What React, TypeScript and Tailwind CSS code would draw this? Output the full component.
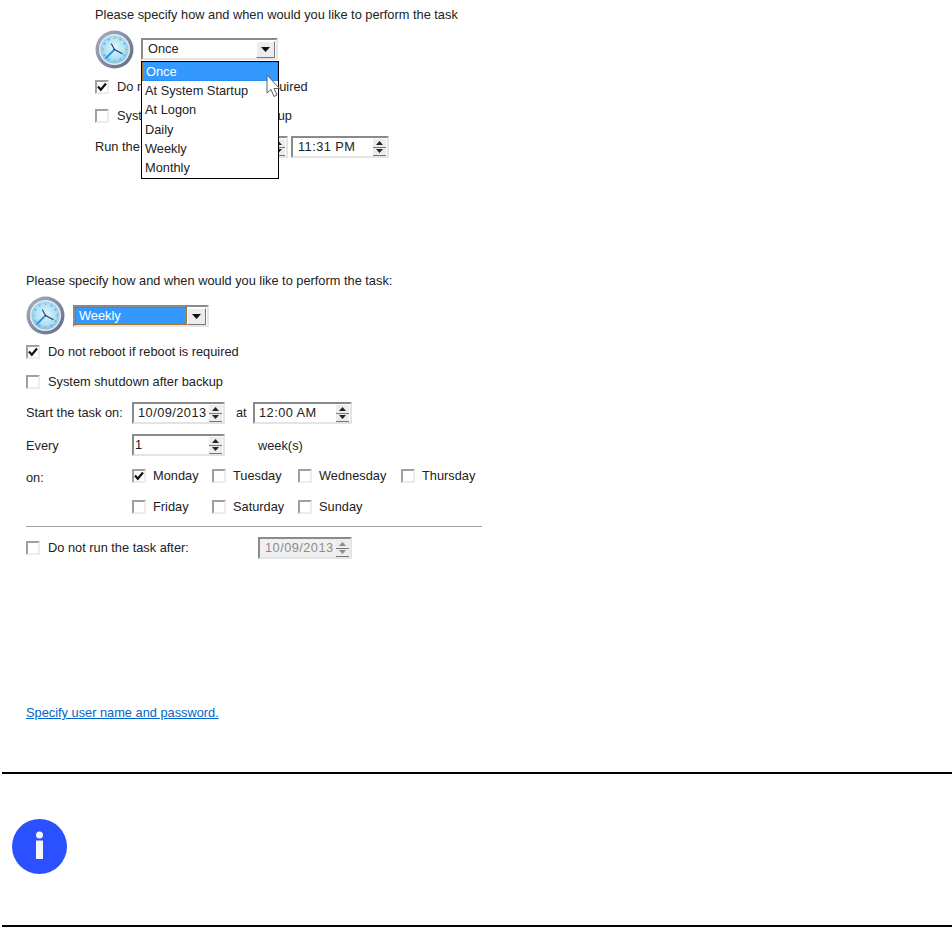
import type { ReactNode } from 'react';

const sunken = 'border-2 border-t-[#8a8a8a] border-l-[#8a8a8a] border-r-[#e4e4e4] border-b-[#e4e4e4]';

function ClockIcon({ id }: { id: string }) {
  const ticks = [0, 30, 60, 90, 120, 150, 180, 210, 240, 270, 300, 330];
  return (
    <svg width="39" height="39" viewBox="0 0 39 39" className="shrink-0">
      <defs>
        <radialGradient id={`${id}-face`} cx="50%" cy="45%" r="55%">
          <stop offset="0%" stopColor="#e6f7fd" />
          <stop offset="70%" stopColor="#a9e0f6" />
          <stop offset="100%" stopColor="#7cc4e8" />
        </radialGradient>
        <linearGradient id={`${id}-ring`} x1="0" y1="0" x2="1" y2="1">
          <stop offset="0%" stopColor="#a9b2c4" />
          <stop offset="100%" stopColor="#5e6880" />
        </linearGradient>
      </defs>
      <circle cx="19.5" cy="19.5" r="19" fill={`url(#${id}-ring)`} />
      <circle cx="19.5" cy="19.5" r="15.5" fill="#e8ebf0" />
      <circle cx="19.5" cy="19.5" r="14" fill={`url(#${id}-face)`} />
      {ticks.map((a) => (
        <circle
          key={a}
          cx={19.5 + 11.5 * Math.sin((a * Math.PI) / 180)}
          cy={19.5 - 11.5 * Math.cos((a * Math.PI) / 180)}
          r="1"
          fill={a % 90 === 0 ? '#f0a050' : '#5fb0dc'}
        />
      ))}
      <path d="M19.5 19.5 L11 28" stroke="#2f8fdc" strokeWidth="1.8" strokeLinecap="round" />
      <path d="M19.5 19.5 L27 23.5" stroke="#33405e" strokeWidth="1.4" strokeLinecap="round" />
      <path d="M19.5 19.5 L16.5 14" stroke="#33405e" strokeWidth="1.2" strokeLinecap="round" />
    </svg>
  );
}

function Checkbox({ checked = false }: { checked?: boolean }) {
  return (
    <span className="w-[14px] h-[14px] shrink-0 bg-white flex items-center justify-center border-2 border-t-[#a0a0a0] border-l-[#a0a0a0] border-r-[#ececec] border-b-[#ececec]">
      {checked && (
        <svg width="10" height="10" viewBox="0 0 10 10" className="shrink-0">
          <path d="M1 4.5 L3.800 7.800 L9 1.500" fill="none" stroke="#111" strokeWidth="2.2" />
        </svg>
      )}
    </span>
  );
}

function CheckLabel({ checked, children }: { checked?: boolean; children?: ReactNode }) {
  return (
    <div className="flex items-center gap-[8px] h-4 whitespace-nowrap">
      <Checkbox checked={checked} />
      <span>{children}</span>
    </div>
  );
}

function DayCheck({ checked, children }: { checked?: boolean; children?: ReactNode }) {
  return (
    <div className="flex items-center gap-[7px] h-4 whitespace-nowrap">
      <Checkbox checked={checked} />
      <span>{children}</span>
    </div>
  );
}

function ArrowButton() {
  return (
    <span className="w-[19px] h-[17px] bg-[#ececec] border border-r-[#777] border-b-[#777] border-t-white border-l-white flex items-center justify-center shrink-0">
      <svg width="9" height="5" viewBox="0 0 9 5">
        <path d="M0 0 H9 L4.500 5 Z" fill="#111" />
      </svg>
    </span>
  );
}

function SpinArrows({ muted = false }: { muted?: boolean }) {
  const fill = muted ? '#8c8c8c' : '#222';
  return (
    <span className="w-[13px] h-full flex flex-col shrink-0 justify-center">
      <span className="h-[8px] bg-[#ececec] flex items-center justify-center">
        <svg width="7" height="4" viewBox="0 0 7 4">
          <path d="M0 4 H7 L3.500 0 Z" fill={fill} />
        </svg>
      </span>
      <span className="h-[1px] bg-[#777]" />
      <span className="h-[8px] bg-[#ececec] flex items-center justify-center border-b border-[#777]">
        <svg width="7" height="4" viewBox="0 0 7 4">
          <path d="M0 0 H7 L3.500 4 Z" fill={fill} />
        </svg>
      </span>
    </span>
  );
}

function Spinner({ value, width, pad = 'pl-[4px]', disabled = false }: { value: string; width: string; pad?: string; disabled?: boolean }) {
  return (
    <div className={`${width} h-[22px] ${sunken} flex items-center justify-between pr-[1px] ${pad} ${disabled ? 'bg-[#f0f0f0] text-[#8c8c8c]' : 'bg-white'}`}>
      <span className="whitespace-nowrap tracking-[0.45px]">{value}</span>
      <SpinArrows muted={disabled} />
    </div>
  );
}

function Cursor() {
  return (
    <svg width="15" height="25" viewBox="0 0 15 25" className="absolute left-[124px] top-[12px]">
      <path d="M1 1 V19 L5 15.500 L8 22.500 L11 21 L8 14.500 H13.500 Z" fill="#fff" stroke="#55606e" strokeWidth="1" />
    </svg>
  );
}

const options = ['Once', 'At System Startup', 'At Logon', 'Daily', 'Weekly', 'Monthly'];

function OnceCombo() {
  return (
    <div className="relative ml-[7px] mt-[8px] w-[137px] h-[22px]">
      <div className={`w-full h-full ${sunken} bg-white flex items-center justify-between pl-[5px] pr-[1px]`}>
        <span>Once</span>
        <ArrowButton />
      </div>
      <div className="absolute left-0 top-[23px] w-[138px] h-[118px] bg-white border border-black flex flex-col">
        {options.map((o, i) => (
          <div
            key={o}
            className={`h-[19.4px] flex items-center pl-[3px] whitespace-nowrap ${i === 0 ? 'bg-[#3399ff] text-white border border-dotted border-[#a06a20]' : ''}`}
          >
            {o}
          </div>
        ))}
        <Cursor />
      </div>
    </div>
  );
}

export default function App() {
  return (
    <div className="w-[952px] h-[927px] bg-white overflow-hidden text-[12.8px] leading-4 text-[#222] font-['Liberation_Sans',Arial,sans-serif]">
      <section className="pl-[95px] pt-[7px]">
        <p className="h-4 whitespace-nowrap">Please specify how and when would you like to perform the task</p>
        <div className="mt-[7px] flex items-start relative z-10">
          <ClockIcon id="top" />
          <OnceCombo />
        </div>
        <div className="mt-[10px]">
          <CheckLabel checked>Do not reboot if reboot is required</CheckLabel>
        </div>
        <div className="mt-[13px]">
          <CheckLabel>System shutdown after backup</CheckLabel>
        </div>
        <div className="mt-[12px] flex items-center h-[22px]">
          <span className="w-[100px] whitespace-nowrap">Run the task on:</span>
          <Spinner value="10/09/2013" width="w-[93px]" />
          <span className="w-[3px]" />
          <Spinner value="11:31 PM" width="w-[98px]" pad="pl-[5px]" />
        </div>
      </section>

      <section className="ml-[26px] mt-[115px] w-[456px]">
        <p className="h-4 whitespace-nowrap">Please specify how and when would you like to perform the task:</p>
        <div className="mt-[7px] flex items-start">
          <ClockIcon id="bottom" />
          <div className={`ml-[8px] mt-[9px] w-[136px] h-[22px] ${sunken} bg-white flex items-center pr-[1px]`}>
            <span className="flex-1 h-full bg-[#3399ff] text-white border border-dotted border-[#a06a20] pl-[3px] flex items-center">Weekly</span>
            <ArrowButton />
          </div>
        </div>
        <div className="mt-[9px]">
          <CheckLabel checked>Do not reboot if reboot is required</CheckLabel>
        </div>
        <div className="mt-[14px]">
          <CheckLabel>System shutdown after backup</CheckLabel>
        </div>
        <div className="mt-[12px] flex items-center h-[22px]">
          <span className="w-[106px] whitespace-nowrap">Start the task on:</span>
          <Spinner value="10/09/2013" width="w-[93px]" />
          <span className="w-[28px] pl-[11px]">at</span>
          <Spinner value="12:00 AM" width="w-[99px]" />
        </div>
        <div className="mt-[10px] flex items-center h-[22px]">
          <span className="w-[106px] pt-px">Every</span>
          <Spinner value="1" width="w-[93px]" pad="pl-[1px]" />
          <span className="ml-[33px] pt-px">week(s)</span>
        </div>
        <div className="mt-[12px] grid grid-cols-[106px_80px_86px_103px_80px] items-center">
          <span className="h-4 pt-[2px]">on:</span>
          <DayCheck checked>Monday</DayCheck>
          <DayCheck>Tuesday</DayCheck>
          <DayCheck>Wednesday</DayCheck>
          <DayCheck>Thursday</DayCheck>
        </div>
        <div className="mt-[15px] grid grid-cols-[106px_80px_86px_103px_80px] items-center">
          <span />
          <DayCheck>Friday</DayCheck>
          <DayCheck>Saturday</DayCheck>
          <DayCheck>Sunday</DayCheck>
        </div>
        <div className="mt-[11px] h-px bg-[#a0a0a0]" />
        <div className="mt-[10px] flex items-center h-[22px]">
          <div className="w-[232px]">
            <CheckLabel>Do not run the task after:</CheckLabel>
          </div>
          <Spinner value="10/09/2013" width="w-[94px]" pad="pl-[5px]" disabled />
        </div>
        <a className="mt-[146px] block h-4 text-[#0066cc] underline whitespace-nowrap">Specify user name and password.</a>
      </section>

      <div className="mt-[51px] ml-[2px] h-[2px] bg-black" />
      <div className="h-[151px] pl-[12px] pt-[45px]">
        <svg width="55" height="55" viewBox="0 0 55 55">
          <circle cx="27.500" cy="27.500" r="27.500" fill="#2b50ff" />
          <circle cx="27.500" cy="16" r="3.500" fill="#f4f6ff" />
          <rect x="24" y="21.500" width="7" height="18.500" fill="#f4f6ff" />
        </svg>
      </div>
      <div className="ml-[2px] h-[2px] bg-black" />
    </div>
  );
}
